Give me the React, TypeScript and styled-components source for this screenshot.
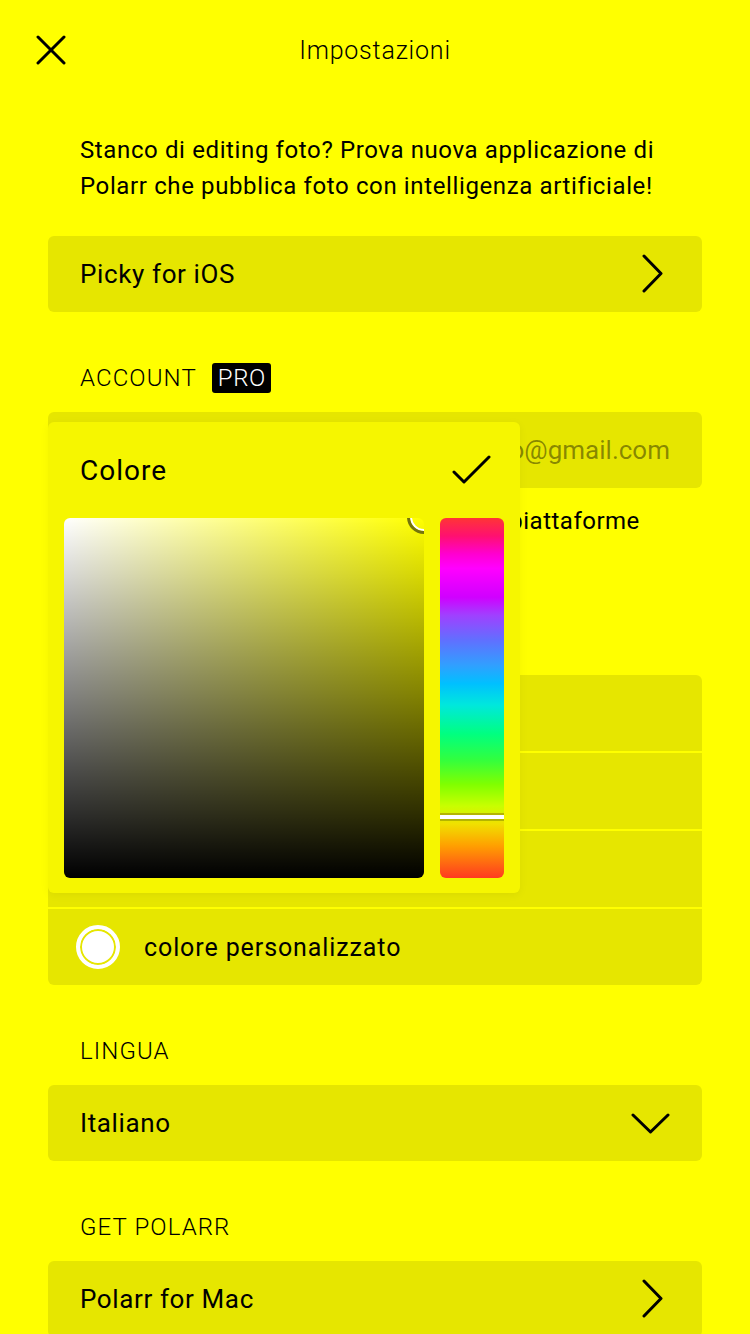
import React from 'react';
import styled, { createGlobalStyle } from 'styled-components';

const GlobalStyle = createGlobalStyle`
	html, body {
		margin: 0;
		padding: 0;
		background: #ffff00;
	}
	* {
		box-sizing: border-box;
	}
`;

const Page = styled.div`
	position: relative;
	width: 750px;
	height: 1334px;
	overflow: hidden;
	background: #ffff00;
	color: #000;
	font-family: Roboto, 'Liberation Sans', sans-serif;
	letter-spacing: 0.62px;
`;

const Header = styled.header`
	height: 100px;
	display: grid;
	grid-template-columns: 1fr auto 1fr;
	align-items: center;
	padding: 0 36px;
`;

const Title = styled.h1`
	margin: 0;
	font-size: 25px;
	font-weight: 300;
	letter-spacing: 0.8px;
`;

const Body = styled.main`
	padding: 0 48px;
	display: flex;
	flex-direction: column;
`;

const Intro = styled.p`
	margin: 32px 0 32px;
	padding: 0 32px;
	font-size: 24px;
	line-height: 36px;
`;

const Card = styled.div<{ muted?: boolean }>`
	height: 76px;
	border-radius: 6px;
	background: #e6e600;
	display: flex;
	align-items: center;
	justify-content: space-between;
	padding: 0 32px;
	font-size: 26px;
	color: ${(props) => (props.muted ? 'rgba(0, 0, 0, 0.42)' : '#000')};
	letter-spacing: ${(props) => (props.muted ? '0px' : '0.62px')};
`;

const SectionLabel = styled.div`
	margin: 52px 0 20px;
	padding: 0 32px;
	height: 28px;
	display: flex;
	align-items: center;
	gap: 15px;
	font-size: 24px;
	font-weight: 300;
	letter-spacing: 1.1px;
`;

const ProBadge = styled.span`
	background: #000;
	color: #fff;
	border-radius: 3px;
	padding: 0 5px 0 6px;
	height: 30px;
	line-height: 30px;
	font-size: 24px;
	font-weight: 300;
	letter-spacing: 0.6px;
`;

const Note = styled.p`
	margin: 15px 0 0;
	padding: 0 32px;
	font-size: 24px;
	line-height: 36px;
	white-space: nowrap;
	letter-spacing: 0.5px;
`;

const Group = styled.div`
	display: flex;
	flex-direction: column;
	gap: 2px;
	border-radius: 6px;
	overflow: hidden;
`;

const OptionRow = styled.div`
	height: 76px;
	background: #e6e600;
	display: flex;
	align-items: center;
	gap: 24px;
	padding: 0 28px;
	font-size: 25px;
	letter-spacing: 0.9px;
`;

const Radio = styled.span<{ fill: string }>`
	width: 44px;
	height: 44px;
	border-radius: 50%;
	border: 4px solid #fff;
	background: ${(props) => props.fill};
	box-shadow: inset 0 0 0 2px #e6e600;
	flex: none;
`;

const Popup = styled.div`
	position: absolute;
	left: 48px;
	top: 422px;
	width: 472px;
	height: 471px;
	border-radius: 6px;
	background: #f6f600;
	box-shadow: 0 2px 10px rgba(0, 0, 0, 0.05);
	padding: 0 16px 15px;
	display: flex;
	flex-direction: column;
`;

const PopupHead = styled.div`
	height: 96px;
	display: flex;
	align-items: center;
	justify-content: space-between;
	padding: 0 12px 0 16px;
	font-size: 28px;
	letter-spacing: 1px;
`;

const PickerRow = styled.div`
	display: flex;
	gap: 16px;
`;

const SatBox = styled.div`
	position: relative;
	width: 360px;
	height: 360px;
	border-radius: 6px;
	overflow: hidden;
	background: linear-gradient(to top, #000, rgba(0, 0, 0, 0)),
		linear-gradient(to right, #fff, #ffff00);
`;

const SatCursor = styled.span`
	position: absolute;
	right: -17px;
	top: -18px;
	width: 34px;
	height: 34px;
	border-radius: 50%;
	border: 3px solid #74740c;
	box-shadow: inset 0 0 0 2px #fff;
`;

const HueBar = styled.div`
	position: relative;
	width: 64px;
	height: 360px;
	border-radius: 6px;
	overflow: hidden;
	background: linear-gradient(
		to bottom,
		#ff3535 0%,
		#ff1070 5%,
		#ff00d0 10%,
		#ff00ff 14%,
		#d000ff 22%,
		#a040ff 27%,
		#6070ff 34%,
		#30a0ff 41%,
		#00c0ff 46%,
		#00e8dc 52%,
		#00ff80 60%,
		#30ff40 67%,
		#80ff00 74%,
		#c8ff00 80%,
		#f0e000 85%,
		#ffa000 91%,
		#ff3a20 100%
	);
`;

const HueMarker = styled.span`
	position: absolute;
	left: 0;
	right: 0;
	top: 295px;
	height: 8px;
	background: #fff;
	border-top: 2px solid #b4b400;
	border-bottom: 2px solid #b4b400;
`;

const Icon = styled.svg`
	display: block;
	fill: none;
	stroke: #000;
	stroke-width: 3;
	stroke-linecap: round;
	stroke-linejoin: round;
`;

const ChevronRight = () => (
	<Icon width="24" height="40" viewBox="0 0 24 40" style={{ marginRight: 5 }}>
		<polyline points="3,2 20,19.5 3,37" />
	</Icon>
);

const ChevronDown = () => (
	<Icon width="40" height="22" viewBox="0 0 40 22" style={{ marginRight: -1 }}>
		<polyline points="2,3 19.5,20 37,3" />
	</Icon>
);

const CloseIcon = () => (
	<Icon width="30" height="30" viewBox="0 0 30 30">
		<line x1="2" y1="2" x2="28" y2="28" />
		<line x1="28" y1="2" x2="2" y2="28" />
	</Icon>
);

const CheckIcon = () => (
	<Icon width="40" height="30" viewBox="0 0 40 30">
		<polyline points="2,17 12,27 37,2" />
	</Icon>
);

const colors = [
	{ name: 'giallo', fill: '#ffff00' },
	{ name: 'bianco', fill: '#ffffff' },
	{ name: 'nero', fill: '#000000' },
];

export default function App() {
	return (
		<Page>
			<GlobalStyle />
			<Header>
				<CloseIcon />
				<Title>Impostazioni</Title>
				<span />
			</Header>
			<Body>
				<Intro>
					Stanco di editing foto? Prova nuova applicazione di Polarr che
					pubblica foto con intelligenza artificiale!
				</Intro>
				<Card>
					Picky for iOS
					<ChevronRight />
				</Card>

				<SectionLabel>
					ACCOUNT <ProBadge>PRO</ProBadge>
				</SectionLabel>
				<Card muted>
					<span />
					polarr.user.demo@gmail.com
				</Card>
				<Note>Sincronizza le impostazioni su tutte le piattaforme</Note>

				<SectionLabel style={{ marginTop: 88 }}>TEMA</SectionLabel>
				<Group>
					{colors.map((c) => (
						<OptionRow key={c.name}>
							<Radio fill={c.fill} />
							{c.name}
						</OptionRow>
					))}
					<OptionRow>
						<Radio fill="#fff" />
						colore personalizzato
					</OptionRow>
				</Group>

				<SectionLabel>LINGUA</SectionLabel>
				<Card>
					Italiano
					<ChevronDown />
				</Card>

				<SectionLabel>GET POLARR</SectionLabel>
				<Card>
					Polarr for Mac
					<ChevronRight />
				</Card>
			</Body>

			<Popup>
				<PopupHead>
					Colore
					<CheckIcon />
				</PopupHead>
				<PickerRow>
					<SatBox>
						<SatCursor />
					</SatBox>
					<HueBar>
						<HueMarker />
					</HueBar>
				</PickerRow>
			</Popup>
		</Page>
	);
}
